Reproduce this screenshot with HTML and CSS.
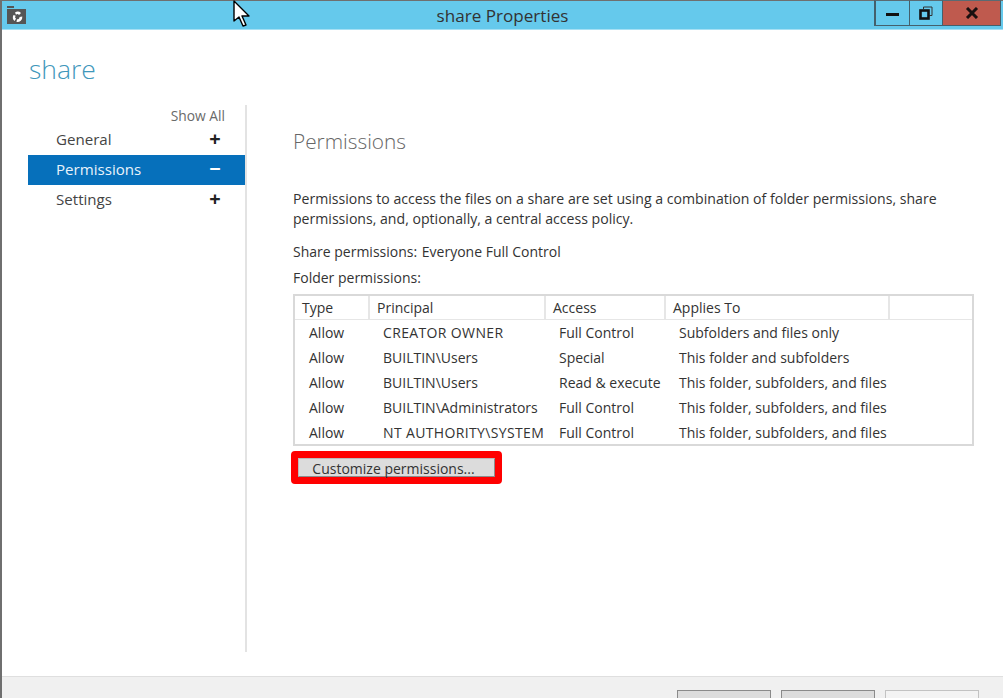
FILE: index.html
```html
<!DOCTYPE html>
<html lang="en">
<head>
<meta charset="utf-8">
<title>share Properties</title>
<link rel="stylesheet" href="styles.css">
</head>
<body>
<div class="window">
  <header class="titlebar">
    <svg class="app-icon" width="20" height="20" viewBox="0 0 20 20">
      <rect x="0" y="0" width="7" height="2" fill="#555"/>
      <rect x="0" y="3" width="19" height="15" fill="#555"/>
      <path d="M8 6.500a5 5 0 0 1 6 .5l-2 2a2 2 0 0 0-3-.3z" fill="#fff"/>
      <path d="M6.500 9a5 5 0 0 0 1 6l1.500-2.200a2 2 0 0 1-.3-3z" fill="#fff"/>
      <path d="M10 13.200a2 2 0 0 0 2.500-2.200l2.800-.5a5 5 0 0 1-5.800 5.500z" fill="#fff"/>
    </svg>
    <div class="title">share Properties</div>
    <div class="controls">
      <div class="ctl ctl-min"><span class="min-glyph"></span></div>
      <div class="ctl ctl-max">
        <svg width="14" height="14" viewBox="0 0 14 14"><path d="M4.500 3V1h8.500v8.500h-2.500" fill="none" stroke="#333" stroke-width="1"/><rect x="1.500" y="4.500" width="8" height="8" fill="none" stroke="#111" stroke-width="2.600"/></svg>
      </div>
      <div class="ctl ctl-close">
        <svg width="14" height="12" viewBox="0 0 14 12"><path d="M2 1l10 10M12 1L2 11" stroke="#1a1010" stroke-width="3" fill="none"/></svg>
      </div>
    </div>
  </header>
  <svg class="cursor" width="18" height="28" viewBox="0 0 18 28"><path d="M1 1v20l5-4 4 9 3-1-4-9h7z" fill="#fff" stroke="#000" stroke-width="1.400" stroke-linejoin="round"/></svg>
  <h1 class="page-name">share</h1>
  <div class="main">
    <nav class="sidebar">
      <div class="show-all">Show All</div>
      <div class="nav-row"><span>General</span><span class="sign">+</span></div>
      <div class="nav-row active"><span>Permissions</span><span class="sign">−</span></div>
      <div class="nav-row"><span>Settings</span><span class="sign">+</span></div>
    </nav>
    <section class="content">
      <h2 class="section-title">Permissions</h2>
      <p class="intro">Permissions to access the files on a share are set using a combination of folder permissions, share permissions, and, optionally, a central access policy.</p>
      <p class="line share-line">Share permissions: <span class="share-value">Everyone Full Control</span></p>
      <p class="line folder-line">Folder permissions:</p>
      <div class="table">
        <div class="thead">
          <div class="th c1">Type</div>
          <div class="th c2">Principal</div>
          <div class="th c3">Access</div>
          <div class="th c4">Applies To</div>
          <div class="th c5"></div>
        </div>
        <div class="tr"><div class="td c1">Allow</div><div class="td c2 caps">CREATOR OWNER</div><div class="td c3">Full Control</div><div class="td c4">Subfolders and files only</div></div>
        <div class="tr"><div class="td c1">Allow</div><div class="td c2">BUILTIN\Users</div><div class="td c3">Special</div><div class="td c4">This folder and subfolders</div></div>
        <div class="tr"><div class="td c1">Allow</div><div class="td c2">BUILTIN\Users</div><div class="td c3">Read &amp; execute</div><div class="td c4">This folder, subfolders, and files</div></div>
        <div class="tr"><div class="td c1">Allow</div><div class="td c2">BUILTIN\Administrators</div><div class="td c3">Full Control</div><div class="td c4">This folder, subfolders, and files</div></div>
        <div class="tr"><div class="td c1">Allow</div><div class="td c2 caps">NT AUTHORITY\SYSTEM</div><div class="td c3">Full Control</div><div class="td c4">This folder, subfolders, and files</div></div>
      </div>
      <div class="highlight"><button class="customize">Customize permissions...</button></div>
    </section>
  </div>
  <footer class="footer">
    <div class="fbtn"></div>
    <div class="fbtn"></div>
    <div class="fbtn fbtn-disabled"></div>
  </footer>
</div>
</body>
</html>
```
FILE: styles.css
```css
* { box-sizing: border-box; }
html, body { margin: 0; height: 100%; overflow: hidden; background: #fff; }
body { font-family: "Open Sans", "Noto Sans", sans-serif; font-size: 14px; color: #333; }
.window { position: relative; width: 1003px; height: 698px; border-left: 2px solid #6f6f6f; display: flex; flex-direction: column; background: #fff; overflow: hidden; }
.titlebar { height: 30px; flex: none; background: #65c9ec; border-top: 1px solid #6f6f6f; border-bottom: 1px solid #a6e0f4; display: flex; align-items: flex-start; position: relative; padding-left: 5px; padding-top: 5px; }
.app-icon { flex: none; }
.title { position: absolute; left: 0; right: 0; top: 4px; text-align: center; font-size: 17.1px; line-height: 22px; color: #333; }
.controls { position: absolute; top: -1px; left: 872px; display: flex; height: 26px; width: 127px; }
.ctl { height: 26px; border: 1px solid #44606c; border-top: 1px solid #5a6a72; display: flex; align-items: center; justify-content: center; }
.ctl-min { width: 36px; border-left-width: 2px; }
.ctl-max { width: 33px; border-left: 0; }
.ctl-close { width: 58px; border-left: 0; background: #bf5a4e; }
.min-glyph { width: 13px; height: 3px; background: #111; margin-top: 3px; }
.cursor { position: absolute; left: 231px; top: 0; }
.page-name { margin: 0; flex: none; height: 75px; padding: 20px 0 0 27px; font-size: 26.5px; line-height: 38px; font-weight: 300; color: #3f97bb; }
.main { flex: 1; display: flex; min-height: 0; }
.sidebar { width: 219px; margin-left: 26px; flex: none; height: 547px; border-right: 2px solid #e3e3e3; }
.show-all { height: 20px; padding-right: 20px; text-align: right; font-size: 13.8px; line-height: 22px; color: #6a6a6a; }
.nav-row { height: 30px; display: flex; align-items: center; justify-content: space-between; padding: 0 24px 2px 28px; font-size: 15.1px; color: #444; }
.nav-row.active { background: #0670bb; color: #e8f3fa; }
.sign { font-size: 20px; font-weight: 700; line-height: 30px; color: #222; width: 12px; text-align: center; }
.active .sign { color: #fff; }
.content { flex: 1; padding: 0 0 0 46px; min-width: 0; }
.section-title { margin: 0; height: 84px; padding-top: 20px; font-size: 20.8px; line-height: 32px; font-weight: 300; color: #666; }
.intro { margin: 0; width: 660px; font-size: 14.1px; line-height: 20px; }
.line { margin: 0; font-size: 14px; line-height: 20px; }
.share-line { margin-top: 13px; }
.share-value { margin-left: 1px; }
.folder-line { margin-top: 6px; }
.table { margin-top: 6px; width: 681px; height: 152px; border: 2px solid #d9d9d9; font-size: 14px; }
.thead { display: flex; height: 24px; border-bottom: 1px solid #e6e6e6; }
.th { height: 24px; border-right: 2px solid #e6e6e6; line-height: 24px; padding-left: 7px; }
.tr { display: flex; height: 25px; line-height: 25px; }
.td { white-space: nowrap; padding-left: 13px; overflow: visible; }
.td.c1 { padding-left: 14px; }
.caps { letter-spacing: 0.36px; }
.c1 { width: 75px; }
.c2 { width: 176px; }
.c3 { width: 120px; }
.c4 { width: 224px; }
.c5 { flex: 1; border-right: 0; }
.highlight { margin-top: 5px; margin-left: -2px; width: 211px; height: 33px; border: 7px solid #f00; border-radius: 4px; background: #fff; display: flex; }
.customize { flex: 1; margin: 0; padding: 0 6px 1px 0; border: 1px solid #8c8c8c; border-left-color: #bbb; border-top-color: #bbb; background: #dcdcdc; font: inherit; font-size: 14px; color: #333; }
.footer { position: absolute; left: 0; right: 0; top: 676px; height: 22px; background: #f0f0f0; border-top: 1px solid #dfdfdf; display: flex; gap: 10px; padding: 13px 0 0 675px; }
.fbtn { width: 94px; height: 20px; background: #dcdcdc; border: 1px solid #8a8a8a; }
.fbtn-disabled { background: #f3f3f3; border-color: #c2c2c2; }
```
